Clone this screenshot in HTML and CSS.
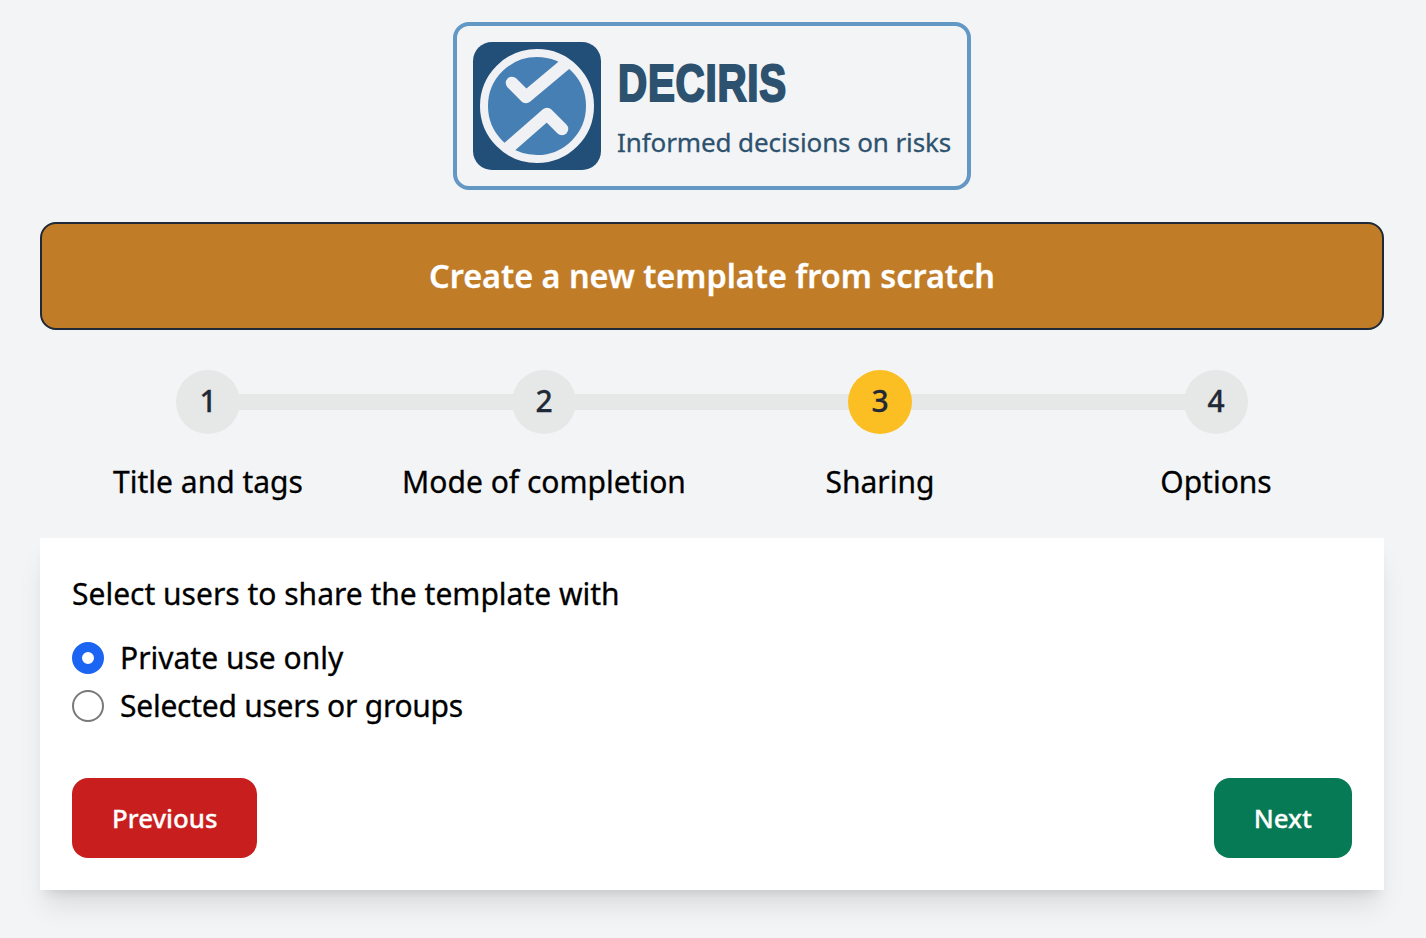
FILE: index.html
```html
<!DOCTYPE html>
<html lang="en">
<head>
<meta charset="utf-8">
<title>Deciris</title>
<link rel="stylesheet" href="styles.css">
</head>
<body>
<div class="page">
  <div class="logo">
    <svg class="logo-icon" viewBox="0 0 128 128" width="128" height="128" aria-hidden="true">
      <defs><clipPath id="disc"><circle cx="64" cy="64" r="55"/></clipPath></defs>
      <rect width="128" height="128" rx="19" fill="#214f78"/>
      <circle cx="64" cy="64" r="53" fill="#467fb3" stroke="#f0f1f4" stroke-width="8"/>
      <g clip-path="url(#disc)" fill="none" stroke="#f0f1f4" stroke-width="12.5" stroke-linecap="round" stroke-linejoin="round">
        <path d="M39 41 L53 55 L102 14"/>
        <path d="M26 114 L74 72 L89 87"/>
      </g>
    </svg>
    <div class="logo-text">
      <div class="brand">DECIRIS</div>
      <div class="tagline">Informed decisions on risks</div>
    </div>
  </div>
  <h1 class="banner">Create a new template from scratch</h1>
  <ol class="steps">
    <li class="step"><span class="dot">1</span><span class="step-label">Title and tags</span></li>
    <li class="step"><span class="dot">2</span><span class="step-label">Mode of completion</span></li>
    <li class="step current"><span class="dot">3</span><span class="step-label">Sharing</span></li>
    <li class="step last"><span class="dot">4</span><span class="step-label">Options</span></li>
  </ol>
  <section class="card">
    <p class="question">Select users to share the template with</p>
    <div class="options">
      <label class="option"><span class="radio checked"></span><span>Private use only</span></label>
      <label class="option"><span class="radio"></span><span class="tight">Selected users or groups</span></label>
    </div>
    <div class="actions">
      <button class="btn prev" type="button">Previous</button>
      <button class="btn next" type="button">Next</button>
    </div>
  </section>
</div>
</body>
</html>
```
FILE: styles.css
```css
* { box-sizing: border-box; }
html, body { margin: 0; padding: 0; }
body {
  background: #f3f4f6;
  font-family: "Noto Sans", "Open Sans", sans-serif;
  color: #000;
  height: 938px;
  overflow: hidden;
  -webkit-text-stroke: 0.3px currentColor;
}
.page {
  padding: 22px 42px 0 40px;
  display: flex;
  flex-direction: column;
}
.logo {
  align-self: center;
  width: 518px;
  height: 168px;
  border: 4px solid #6398c4;
  border-radius: 16px;
  padding: 16px;
  display: flex;
  align-items: center;
  gap: 16px;
}
.logo-icon { flex: none; display: block; }
.logo-text { display: flex; flex-direction: column; }
.brand {
  font-family: "Liberation Sans", sans-serif;
  font-weight: 700;
  font-size: 52px;
  line-height: 60px;
  color: #2d526f;
  -webkit-text-stroke: 2.2px #2d526f;
  transform: scaleX(0.775);
  transform-origin: left center;
  letter-spacing: 1px;
  margin-left: 1px;
}
.tagline {
  font-size: 26px;
  line-height: 36px;
  letter-spacing: -0.1px;
  color: #2d526f;
  margin-top: 11px;
  white-space: nowrap;
}
.banner {
  margin: 32px 0 0;
  height: 108px;
  padding-bottom: 2px;
  background: #c17c27;
  border: 2px solid #1f2937;
  border-radius: 16px;
  color: #fff;
  font-size: 32.4px;
  font-weight: 600;
  display: flex;
  align-items: center;
  justify-content: center;
}
.steps {
  list-style: none;
  margin: 40px 0 0;
  padding: 0;
  display: grid;
  grid-template-columns: repeat(4, 1fr);
}
.step {
  display: flex;
  flex-direction: column;
  align-items: center;
  position: relative;
}
.step::after {
  content: "";
  position: absolute;
  top: 24px;
  left: 50%;
  width: 100%;
  height: 16px;
  background: #e6e7e7;
}
.step.last::after { display: none; }
.dot {
  position: relative;
  z-index: 1;
  width: 64px;
  height: 64px;
  border-radius: 50%;
  background: #e6e7e7;
  color: #1f2937;
  font-size: 30px;
  font-weight: 500;
  line-height: 62px;
  text-align: center;
}
.current .dot { background: #fbbf24; }
.step-label {
  margin-top: 24px;
  font-size: 30px;
  line-height: 48px;
  white-space: nowrap;
}
.card {
  margin-top: 32px;
  height: 352px;
  background: #fff;
  padding: 32px;
  box-shadow: 0 20px 25px -5px rgba(0,0,0,.1), 0 8px 10px -6px rgba(0,0,0,.1);
  display: flex;
  flex-direction: column;
}
.question {
  margin: 0;
  font-size: 30px;
  line-height: 48px;
}
.options { margin-top: 16px; display: flex; flex-direction: column; }
.option {
  display: flex;
  align-items: center;
  gap: 16px;
  font-size: 30px;
  line-height: 48px;
}
.tight { letter-spacing: -0.25px; }
.radio {
  width: 32px;
  height: 32px;
  border-radius: 50%;
  border: 2px solid #78797b;
  background: #fff;
  flex: none;
}
.radio.checked { border: 10px solid #1c64f2; }
.actions {
  margin-top: auto;
  display: flex;
  justify-content: space-between;
}
.btn {
  height: 80px;
  padding: 0 40px;
  border: 0;
  border-radius: 16px;
  color: #fff;
  font: 500 25.8px "Noto Sans", sans-serif;
}
.prev { background: #c81e1e; }
.next { background: #057a55; }
```
